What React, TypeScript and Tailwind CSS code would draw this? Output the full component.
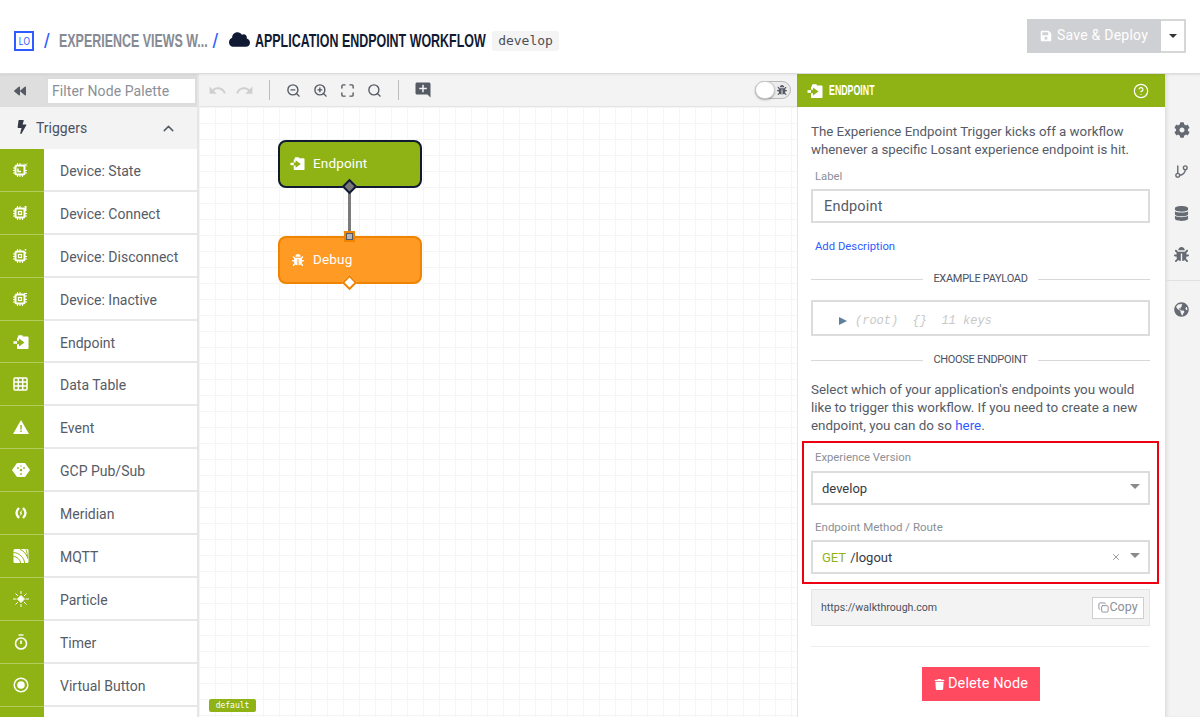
import React from 'react';
import { ChevronUp, ZoomIn, ZoomOut, Search, Maximize, CircleHelp, GitBranch, Copy, X } from 'lucide-react';
import { FaBackward, FaBolt, FaBug, FaCloud, FaCog, FaDatabase, FaGlobeAmericas, FaSave, FaTrash } from 'react-icons/fa';
import { MdAddComment, MdRedo, MdUndo } from 'react-icons/md';

const GREEN = '#8fb315';

const EndpointIcon = ({ size = 16, fill = GREEN }: { size?: number; fill?: string }) => (
  <svg width={size} height={size} viewBox="0 0 16 16">
    <path d="M5 3.500V2.500C5 1.700 5.500 1.200 6.300 1.200h2.400c.7 0 1.200.5 1.300 1.300h4.500c.6 0 1 .4 1 1V14c0 .6-.4 1-1 1H5c-.6 0-1-.4-1-1V4.500c0-.5.4-1 1-1z" fill="white" />
    <path d="M4 6.800h2V4.600l5.500 3.900L6 12.400v-2.200H4z" fill={fill} />
    <path d="M0.500 7.200H4v2.600H.5z" fill="white" />
  </svg>
);

const Chip = ({ mark }: { mark: 'state' | 'connect' | 'disconnect' | 'inactive' }) => (
  <svg width="16" height="16" viewBox="0 0 16 16" fill="none" stroke="white">
    <rect x="2.500" y="3.500" width="9" height="9" rx="1.500" strokeWidth="2" />
    <path d="M4.500 1v2M7 1v2M4.500 13v2M7 13v2M9.500 13v2M0 6h2M0 8.500h2M0 11h2M12 8.500h2M12 11h2" strokeWidth="1" />
    {mark === 'state' ? <path d="M5 6.500v3h3" strokeWidth="1.500" /> : <rect x="5.500" y="6.500" width="3" height="3" strokeWidth="1.200" />}
    {mark === 'state' && <path d="M11 1.500 14 4.500M14 1.500 11 4.500" strokeWidth="1" />}
    {mark === 'connect' && <path d="M12.500 1v5" strokeWidth="2" />}
    {mark === 'disconnect' && <path d="M12.500 1v1.500M12.500 4v1.500" strokeWidth="1.500" />}
    {mark === 'inactive' && <path d="M11 2.500h3M11 5h3" strokeWidth="1" />}
  </svg>
);

const items: { label: string; icon: React.ReactNode }[] = [
  { label: 'Device: State', icon: <Chip mark="state" /> },
  { label: 'Device: Connect', icon: <Chip mark="connect" /> },
  { label: 'Device: Disconnect', icon: <Chip mark="disconnect" /> },
  { label: 'Device: Inactive', icon: <Chip mark="inactive" /> },
  { label: 'Endpoint', icon: <EndpointIcon /> },
  {
    label: 'Data Table',
    icon: (
      <svg width="16" height="16" viewBox="0 0 16 16" fill="none" stroke="white" strokeWidth="1.500">
        <rect x="1" y="2" width="13" height="12" rx="1" />
        <path d="M5.300 2v12M9.700 2v12M1 6h13M1 10h13" />
      </svg>
    ),
  },
  {
    label: 'Event',
    icon: (
      <svg width="16" height="16" viewBox="0 0 16 16">
        <path d="M8 1 16 15H0z" fill="white" />
        <path d="M7.300 6h1.400v4.500H7.300zM7.300 11.500h1.400V13H7.300z" fill={GREEN} />
      </svg>
    ),
  },
  {
    label: 'GCP Pub/Sub',
    icon: (
      <svg width="18" height="16" viewBox="0 0 18 16">
        <path d="M5 1h8l5 7-5 7H5L0 8z" fill="white" />
        <circle cx="9" cy="8" r="1.200" fill={GREEN} />
        <circle cx="6" cy="6" r=".9" fill={GREEN} />
        <circle cx="12" cy="6" r=".9" fill={GREEN} />
        <circle cx="9" cy="12" r=".9" fill={GREEN} />
        <circle cx="9" cy="4" r=".7" fill={GREEN} />
      </svg>
    ),
  },
  {
    label: 'Meridian',
    icon: (
      <svg width="12" height="12" viewBox="0 0 12 12" fill="none" stroke="white">
        <path d="M4 1C2 3 1.500 4.500 1.500 6S2 9 4 11" strokeWidth="2.400" />
        <path d="M8 1c2 2 2.500 3.500 2.500 5S10 9 8 11" strokeWidth="2.400" />
        <path d="M7 3.500 5 6h2L5 8.500" strokeWidth="1" />
      </svg>
    ),
  },
  {
    label: 'MQTT',
    icon: (
      <svg width="16" height="16" viewBox="0 0 16 16">
        <rect x="0.500" y="1" width="15" height="14" rx="1.500" fill="white" />
        <path d="M0.500 4.500C6 4.500 11.500 10 11.500 15M0.500 8.500C4 8.500 7.500 12 7.500 15M13 1.500c1 3 1.500 5 1.500 9M7 1.500c3 1 6 4 7 7" fill="none" stroke={GREEN} strokeWidth="1" />
      </svg>
    ),
  },
  {
    label: 'Particle',
    icon: (
      <svg width="16" height="16" viewBox="0 0 16 16" fill="white" stroke="white">
        <path d="M8 4.500 11.500 8 8 11.500 4.500 8z" strokeWidth="1" />
        <path d="M8 0v3M8 13v3M0 8h3.500M12.500 8H16M2.500 2.500l2.500 2.500M11 11l2.500 2.500M13.500 2.500 11 5M5 11l-2.500 2.500" strokeWidth="1" />
      </svg>
    ),
  },
  {
    label: 'Timer',
    icon: (
      <svg width="14" height="16" viewBox="0 0 14 16" fill="none" stroke="white">
        <circle cx="7" cy="9.500" r="5.500" strokeWidth="1.600" />
        <path d="M4.500 1h5" strokeWidth="1.400" />
        <path d="M7 6.500v3.500" strokeWidth="1.600" />
      </svg>
    ),
  },
  {
    label: 'Virtual Button',
    icon: (
      <svg width="16" height="16" viewBox="0 0 16 16" fill="none">
        <circle cx="8" cy="8" r="6.800" stroke="white" strokeWidth="1.500" />
        <circle cx="8" cy="8" r="3.800" fill="white" />
      </svg>
    ),
  },
  { label: '', icon: null },
];

const Divider = ({ label }: { label: string }) => (
  <div className="flex items-center gap-[10px] h-[16px]">
    <div className="flex-1 h-px bg-[#d8d8d8]" />
    <span className="text-[11px] tracking-[-0.3px] text-[#4b5160]">{label}</span>
    <div className="flex-1 h-px bg-[#d8d8d8]" />
  </div>
);

const Caret = ({ className = '' }: { className?: string }) => (
  <span className={`w-0 h-0 border-x-[5.500px] border-x-transparent border-t-[5px] border-t-[#8a8a8a] ${className}`} />
);

export default function App() {
  return (
    <div className="font-['Roboto',sans-serif] w-[1200px] h-[717px] overflow-hidden flex flex-col bg-white text-[#4b5160]">
      {/* Top bar */}
      <header className="h-[74px] shrink-0 flex items-center border-b border-[#dcdcdc] pl-[14px] pr-[14px] relative z-10 shadow-[0_1px_2px_rgba(0,0,0,0.06)]">
        <div className="flex items-center mt-[9px] font-['Liberation_Sans',sans-serif]">
          <div className="w-[20px] h-[20px] border-2 border-[#2f5cff] flex items-center justify-center">
            <span className="text-[11px] text-[#2f5cff] scale-x-75">LO</span>
          </div>
          <span className="text-[#2f5cff] text-[20px] ml-[10px]">/</span>
          <div className="ml-[9px] w-[149px] h-[24px] flex items-center">
            <span className="text-[19px] text-[#868a94] font-bold whitespace-nowrap origin-left scale-x-[0.655]">EXPERIENCE VIEWS W...</span>
          </div>
          <span className="text-[#2f5cff] text-[20px] ml-[5px]">/</span>
          <FaCloud size={21} className="ml-[11px] -mt-[3px] text-[#101a33]" />
          <div className="ml-[5px] w-[233px] h-[24px] flex items-center">
            <span className="text-[19px] text-[#101a33] font-bold whitespace-nowrap origin-left scale-x-[0.655]">APPLICATION ENDPOINT WORKFLOW</span>
          </div>
          <span className="ml-[4px] h-[20px] px-[6px] flex items-center rounded-[3px] bg-[#f4f4f4] text-[13px] text-[#4b4f57] font-['DejaVu_Sans_Mono',monospace]">develop</span>
        </div>
        <div className="ml-auto flex h-[34px] -mt-[2px]">
          <div className="w-[134px] flex items-center justify-center gap-[5px] bg-[#cfd0d3] text-white text-[14px] tracking-[0.25px]">
            <FaSave size={12} />
            Save &amp; Deploy
          </div>
          <div className="w-[25px] border-2 border-l-0 border-[#d6d6d8] flex items-center justify-center">
            <span className="w-0 h-0 border-x-[4px] border-x-transparent border-t-[4px] border-t-[#333]" />
          </div>
        </div>
      </header>

      <main className="flex-1 flex min-h-0">
        {/* Node palette */}
        <aside className="w-[199px] shrink-0 flex flex-col border-r-2 border-[#e6e6e6]">
          <div className="h-[33px] shrink-0 bg-[#dedede] flex items-center">
            <div className="w-[46px] pr-[6px] flex justify-center">
              <FaBackward size={12} className="text-[#555a64]" />
            </div>
            <div className="w-[151px] h-[28px] bg-white border-2 border-[#dcdcdc] flex items-center px-[4px] pt-[1px] text-[14px] tracking-[0.1px] text-[#8b8f98]">Filter Node Palette</div>
          </div>
          <div className="h-[42px] shrink-0 bg-[#f3f3f3] flex items-center pl-[15px] pr-[20px]">
            <FaBolt size={14} className="text-[#333a45] -mt-[3px]" />
            <span className="ml-[7px] text-[14px]">Triggers</span>
            <ChevronUp size={17} className="ml-auto text-[#555a64]" />
          </div>
          {items.map((item, i) => (
            <div key={i} className="h-[42.900px] shrink-0 flex">
              <div className="w-[44px] pr-[3px] bg-[#8fb315] flex items-center justify-center border-b border-[#b4cc5e]">{item.icon}</div>
              <div className="flex-1 flex items-center pl-[16px] pt-[4px] text-[14px] text-[#565b68] border-b-2 border-[#e8e8e8]">{item.label}</div>
            </div>
          ))}
        </aside>

        {/* Canvas */}
        <section className="flex-1 min-w-0 flex flex-col">
          <div className="h-[33px] shrink-0 bg-[#f3f3f3] border-b border-[#e4e4e4] flex items-center pl-[9px] pr-[6px]">
            <MdUndo size={19} className="text-[#cfcfcf]" />
            <MdRedo size={19} className="ml-[8px] text-[#cfcfcf]" />
            <div className="w-px h-[20px] bg-[#bdbdbd] ml-[15px]" />
            <ZoomOut size={15} strokeWidth={2.200} className="ml-[16px] text-[#555a64]" />
            <ZoomIn size={15} strokeWidth={2.200} className="ml-[12px] text-[#555a64]" />
            <Maximize size={15} strokeWidth={2.200} className="ml-[12px] text-[#555a64]" />
            <Search size={15} strokeWidth={2.200} className="ml-[12px] text-[#555a64]" />
            <div className="w-px h-[20px] bg-[#bdbdbd] ml-[16px]" />
            <MdAddComment size={18} className="ml-[15px] text-[#555a64]" />
            <div className="ml-auto relative w-[36px] h-[18px] rounded-full border border-[#b9b9b9] bg-[#ececec] flex items-center justify-end pr-[3px]">
              <FaBug size={10} className="text-[#555a64]" />
              <span className="absolute -left-px -top-px w-[20px] h-[18px] rounded-full bg-white border border-[#c8c8c8] shadow-[0_1px_2px_rgba(0,0,0,0.3)]" />
            </div>
          </div>
          <div className="flex-1 relative bg-white bg-[linear-gradient(#f5f5f5_1px,transparent_1px),linear-gradient(90deg,#f5f5f5_1px,transparent_1px)] bg-[size:16px_16px]">
            {/* Nodes */}
            <div className="absolute left-[79px] top-[33px] w-[144px] h-[48px] rounded-[8px] bg-[#8fb315] border-2 border-[#101a33] flex items-center pl-[10px] pb-[1px] text-white text-[13.500px] tracking-[0.15px]">
              <EndpointIcon size={15} />
              <span className="ml-[8px]">Endpoint</span>
            </div>
            <div className="absolute left-[149px] top-[82px] w-[3px] h-[48px] bg-[#7b7b7b]" />
            <div className="absolute left-[145px] top-[74px] w-[11px] h-[11px] rotate-45 bg-[#777] border-2 border-[#101a33]" />
            <div className="absolute left-[79px] top-[129px] w-[144px] h-[48px] rounded-[8px] bg-[#ff9a24] border-2 border-[#f08300] flex items-center pl-[12px] pb-[1px] text-white text-[13.500px] tracking-[0.15px]">
              <FaBug size={12} />
              <span className="ml-[9px]">Debug</span>
            </div>
            <div className="absolute left-[145px] top-[124px] w-[11px] h-[11px] bg-[#f08300] flex items-center justify-center">
              <span className="w-[7px] h-[7px] bg-[#b5b5b5] border border-[#555a64]" />
            </div>
            <div className="absolute left-[145px] top-[170px] w-[11px] h-[11px] rotate-45 bg-white border-2 border-[#f08300]" />
            <div className="absolute left-[10px] bottom-[5px] h-[13px] w-[47px] rounded-[2px] bg-[#8fb315] text-white text-[8px] flex items-center justify-center font-['DejaVu_Sans_Mono',monospace]">default</div>
          </div>
        </section>

        {/* Node config panel */}
        <section className="w-[368px] shrink-0 flex flex-col">
          <div className="h-[33px] shrink-0 bg-[#8fb315] flex items-center pl-[10px] pr-[16px] text-white">
            <EndpointIcon size={16} />
            <div className="ml-[6px] w-[60px] flex items-center">
              <span className="text-[14px] font-bold font-['Liberation_Sans',sans-serif] origin-left scale-x-[0.63]">ENDPOINT</span>
            </div>
            <CircleHelp size={16} strokeWidth={1.800} className="ml-auto" />
          </div>
          <div className="flex-1 pl-[13px] pr-[15px] flex flex-col border-l border-[#e4e4e4]">
            <p className="mt-[16px] text-[13.300px] leading-[18px] text-[#565b68]">The Experience Endpoint Trigger kicks off a workflow whenever a specific Losant experience endpoint is hit.</p>
            <label className="mt-[10px] ml-[4px] h-[16px] flex items-center text-[11.300px] text-[#8b8f98]">Label</label>
            <div className="mt-[4px] h-[34px] border-2 border-[#dcdcdc] flex items-center pl-[11px] pt-[1px] text-[14.500px] tracking-[0.2px] text-[#565b68]">Endpoint</div>
            <a className="mt-[16px] ml-[4px] h-[16px] flex items-center text-[11.300px] text-[#2f5cff]">Add Description</a>
            <div className="mt-[16px]"><Divider label="EXAMPLE PAYLOAD" /></div>
            <div className="mt-[13px] h-[36px] border-2 border-[#dcdcdc] flex items-center pl-[26px] pt-[5px] font-['Liberation_Mono',monospace] italic text-[12px] whitespace-pre text-[#c8c8c8]">
              <span className="w-0 h-0 border-y-[4.500px] border-y-transparent border-l-[8px] border-l-[#5f7f9c] mr-[8px]" />
              <span>{'(root)  {}  11 keys'}</span>
            </div>
            <div className="mt-[16px]"><Divider label="CHOOSE ENDPOINT" /></div>
            <p className="mt-[13px] text-[13.400px] leading-[18px] text-[#565b68]">Select which of your application's endpoints you would like to trigger this workflow. If you need to create a new endpoint, you can do so <span className="text-[#2f5cff]">here</span>.</p>

            {/* Highlighted section */}
            <div className="mt-[6px] -mx-[9px] h-[143px] border-2 border-[#ec0012] px-[7px]">
              <div className="mt-[7px] ml-[4px] h-[16px] flex items-center text-[11.300px] text-[#8b8f98]">Experience Version</div>
              <div className="mt-[5px] h-[34px] border-2 border-[#dcdcdc] flex items-center pl-[9px] pr-[8px] pt-[2px] text-[13px] text-[#333a45]">
                develop
                <Caret className="ml-auto -mt-[5px]" />
              </div>
              <div className="mt-[15px] ml-[4px] h-[16px] flex items-center text-[11.500px] text-[#8b8f98]">Endpoint Method / Route</div>
              <div className="mt-[4px] h-[34px] border-2 border-[#dcdcdc] flex items-center pl-[9px] pr-[8px] pt-[2px] text-[13px] text-[#333a45]">
                <span className="text-[#8fb315]">GET</span>
                <span className="ml-[4px]">/logout</span>
                <X size={10} strokeWidth={2} className="ml-auto -mt-[2px] text-[#8a8a8a]" />
                <Caret className="ml-[9px] -mt-[5px]" />
              </div>
            </div>

            <div className="mt-[5px] h-[37px] bg-[#f3f3f3] border border-[#e4e4e4] flex items-center pl-[9px] pr-[5px] text-[10.600px] text-[#4b5160]">
              https://walkthrough.com
              <div className="ml-auto w-[52px] h-[22px] bg-white border border-[#cfcfcf] flex items-center justify-center text-[12.500px] text-[#8b8f98]">
                <Copy size={11} />
                Copy
              </div>
            </div>
            <div className="mt-[20px] h-px bg-[#eeeeee]" />
            <div className="mt-[20px] self-center w-[118px] h-[34px] bg-[#ff4a60] flex items-center justify-center gap-[3px] text-white text-[14.500px] tracking-[0.1px] ml-[1px]">
              <FaTrash size={11} />
              Delete Node
            </div>
          </div>
        </section>

        {/* Right rail */}
        <nav className="w-[35px] shrink-0 bg-[#f3f3f3] border-l border-[#e0e0e0] shadow-[inset_2px_0_3px_rgba(0,0,0,0.05)] flex flex-col items-center text-[#666a72]">
          <FaCog size={16} className="mt-[48px] mr-[3px]" />
          <GitBranch size={15} strokeWidth={2.200} className="mt-[26px] mr-[3px]" />
          <FaDatabase size={15} className="mt-[27px] mr-[3px]" />
          <FaBug size={15} className="mt-[26px] mr-[3px]" />
          <div className="w-full h-px bg-[#e0e0e0] mt-[18px]" />
          <FaGlobeAmericas size={15} className="mt-[21px] mr-[3px]" />
        </nav>
      </main>
    </div>
  );
}
